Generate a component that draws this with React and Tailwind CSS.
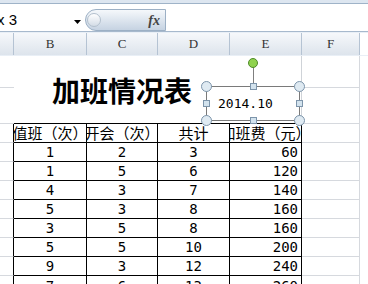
export default function App() {
  const rows = [
    [1, 2, 3, 60],
    [1, 5, 6, 120],
    [4, 3, 7, 140],
    [5, 3, 8, 160],
    [3, 5, 8, 160],
    [5, 5, 10, 200],
    [9, 3, 12, 240],
    [7, 6, 13, 260],
  ];
  const cjk = "font-['Noto_Sans_CJK_SC',sans-serif]";
  const mono = "font-['DejaVu_Sans_Mono',monospace]";
  const hdr = "flex items-center justify-center border-r border-[#b5c3d3] text-[13px] text-[#333] font-['Liberation_Serif',serif]";
  const tcell = "flex items-center justify-center overflow-hidden whitespace-nowrap border-r border-b border-black text-black";
  const gridA = "border-r border-b border-[#d6d9de]";

  return (
    <div className="relative w-[368px] h-[284px] overflow-hidden bg-white">
      {/* top strip */}
      <div className="h-[4px] bg-[#dde6f0] border-b border-[#9fb3c8]" />
      {/* formula bar */}
      <div className="flex h-[28px] bg-white border-b border-[#a7b9cd]">
        <div className="relative w-[85px] overflow-hidden flex items-center pt-[5px]">
          <span className="ml-[-3px] whitespace-pre text-[15px] text-black font-['Liberation_Sans',sans-serif]">x 3</span>
          <svg className="absolute left-[74px] top-[16px]" width="7" height="4" viewBox="0 0 7 4">
            <path d="M0 0H7L3.5 4Z" fill="#000" />
          </svg>
        </div>
        <div className="self-end flex items-center justify-between w-[81px] h-[22px] rounded-l-full border border-[#9cb0c5] bg-linear-to-b from-[#f5f8fb] to-[#c6d3e2]">
          <div className="ml-[1px] w-[14px] h-[14px] rounded-full border border-[#b3c0cd] bg-linear-to-b from-[#ffffff] to-[#d3dce6]" />
          <span className="mr-[5px] text-[14px] italic font-bold text-[#444] font-['Liberation_Serif',serif]">fx</span>
        </div>
        <div className="flex-1" />
      </div>
      {/* column headers */}
      <div className="flex h-[24px] border-t border-[#e9eff6] border-b border-[#9cb3cb] bg-linear-to-b from-[#f6f8fb] to-[#dde4ec]">
        <div className={`${hdr} w-[14px]`} />
        <div className={`${hdr} w-[73px]`}>B</div>
        <div className={`${hdr} w-[71px]`}>C</div>
        <div className={`${hdr} w-[72px]`}>D</div>
        <div className={`${hdr} w-[72px]`}>E</div>
        <div className={`${hdr} w-[58px]`}>F</div>
        <div className="flex-1 bg-white" />
      </div>
      {/* sheet body */}
      <div className="grid grid-cols-[14px_73px_71px_72px_72px_58px_1fr] grid-rows-[32px_36px_repeat(8,19px)]">
        {/* rows 1-2 */}
        <div className="border-b border-[#d6d9de]" />
        <div className={`col-span-3 row-span-2 flex items-center justify-center border-b border-black text-[28px] font-bold text-black ${cjk}`}>
          加班情况表
        </div>
        <div className="row-span-2 border-r border-b border-[#cfd3d8] border-b-black" />
        <div className="border-r border-b border-[#d6d9de]" />
        <div />
        <div className="border-b border-[#d6d9de]" />
        <div className="border-r border-b border-[#d6d9de]" />
        <div />
        {/* table header */}
        <div className="border-r border-black border-b border-b-[#d6d9de]" />
        <div className={`${tcell} text-[15px] ${cjk}`}>值班（次）</div>
        <div className={`${tcell} text-[15px] ${cjk}`}>开会（次）</div>
        <div className={`${tcell} text-[15px] ${cjk}`}>共计</div>
        <div className={`${tcell} text-[15px] ${cjk}`}>加班费（元）</div>
        <div className={gridA} />
        <div />
        {rows.map((r, i) => (
          <div key={i} className="contents">
            <div className="border-r border-black border-b border-b-[#d6d9de]" />
            <div className={`${tcell} text-[14px] ${mono}`}>{r[0]}</div>
            <div className={`${tcell} text-[14px] ${mono}`}>{r[1]}</div>
            <div className={`${tcell} text-[14px] ${mono}`}>{r[2]}</div>
            <div className={`${tcell} !justify-end pr-[3px] text-[14px] ${mono}`}>{r[3]}</div>
            <div className={gridA} />
            <div />
          </div>
        ))}
      </div>

      {/* selected text box overlay */}
      <div className="absolute left-[253px] top-[67px] w-px h-[19px] bg-[#7f7f7f]" />
      <div className="absolute left-[248px] top-[58px] w-[10px] h-[10px] rounded-full border border-[#4f8a2a] bg-[#8fd24e]" />
      <div className="absolute left-[206px] top-[86px] w-[94px] h-[35px] border border-[#7a7a7a] bg-white flex items-center pl-[11px]">
        <span className={`text-[13px] text-black ${mono}`}>2014.10</span>
      </div>
      {/* corner handles */}
      <div className="absolute left-[201px] top-[81px] w-[11px] h-[11px] rounded-full border border-[#7d95ab] bg-[#dfeaf2]" />
      <div className="absolute left-[294px] top-[81px] w-[11px] h-[11px] rounded-full border border-[#7d95ab] bg-[#dfeaf2]" />
      <div className="absolute left-[201px] top-[115px] w-[11px] h-[11px] rounded-full border border-[#7d95ab] bg-[#dfeaf2]" />
      <div className="absolute left-[294px] top-[115px] w-[11px] h-[11px] rounded-full border border-[#7d95ab] bg-[#dfeaf2]" />
      {/* edge handles */}
      <div className="absolute left-[250px] top-[83px] w-[7px] h-[7px] border border-[#7d95ab] bg-[#d3e3ee]" />
      <div className="absolute left-[250px] top-[117px] w-[7px] h-[7px] border border-[#7d95ab] bg-[#d3e3ee]" />
      <div className="absolute left-[203px] top-[100px] w-[7px] h-[7px] border border-[#7d95ab] bg-[#d3e3ee]" />
      <div className="absolute left-[296px] top-[100px] w-[7px] h-[7px] border border-[#7d95ab] bg-[#d3e3ee]" />
    </div>
  );
}
